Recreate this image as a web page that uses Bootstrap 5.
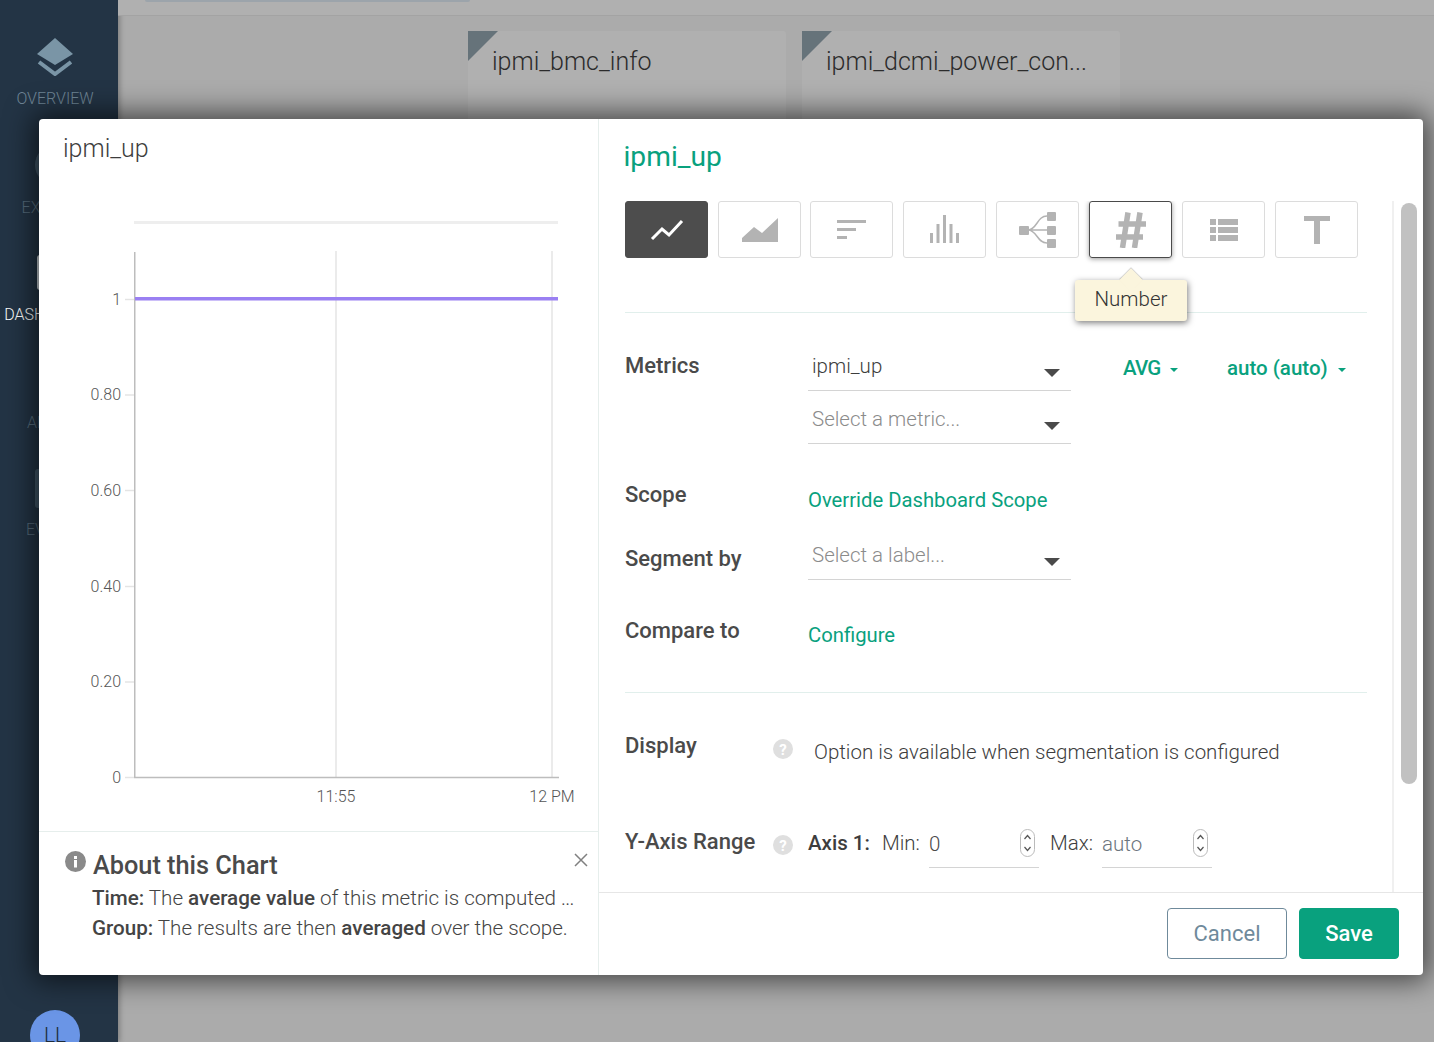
<!DOCTYPE html>
<html lang="en">
<head>
<meta charset="UTF-8">
<title>ipmi_up</title>
<link href="https://cdn.jsdelivr.net/npm/bootstrap@5.3.0/dist/css/bootstrap.min.css" rel="stylesheet">
<style>
html, body { height: 100%; overflow: hidden; }
body { font-family: Roboto, "Liberation Sans", sans-serif; color: #4a4a4a; background: #ababab; }
.app-shell { height: 1042px; }
.side-rail { width: 118px; background: #233445; color: #6f8595; box-shadow: 2px 0 5px rgba(0,0,0,.25); padding-right: 8px; }
.rail-item { height: 108px; font-size: 16px; font-weight: 300; white-space: nowrap; position: relative; }
.rail-item.first { height: 125px; padding-top: 38px; }
.rail-item span { position: absolute; left: 0; right: 0; }
.rail-active { color: #fff; }
.rail-circle { position: absolute; left: 35px; top: 20px; width: 40px; height: 40px; border-radius: 50%; background: #43586a; }
.rail-square { position: absolute; left: 37px; top: 22px; width: 36px; height: 35px; border-radius: 3px; background: #c9d0d5; }
.rail-square.dim { left: 35px; top: 20px; height: 39px; background: #43586a; }
.rail-avatar { width: 50px; height: 50px; border-radius: 50%; background: #6a95e6; color: #1d2c3b; font-size: 21px; font-weight: 300; left: 30px; top: 1010px; line-height: 50px; }
.bg-top { height: 16px; border-bottom: 1px solid #a3a3a3; background: #b0b0b0; }
.bg-topbar { left: 145px; top: 0; width: 325px; height: 2px; background: #9ca4ab; border-radius: 0 0 3px 3px; }
.bg-tile { width: 318px; height: 120px; background: #b0b0b0; font-size: 25px; font-weight: 300; color: #2b2b2b; padding: 12px 0 0 24px; border-radius: 3px 3px 0 0; }
.bg-tile::before { content: ""; position: absolute; left: 0; top: 0; border-style: solid; border-width: 30px 30px 0 0; border-color: #66737a transparent transparent transparent; }
.dash-tiles { gap: 16px; padding: 15px 0 0 350px; }
.chart-dialog { left: 39px; top: 119px; width: 1384px; height: 856px; background: #fff; border-radius: 4px; box-shadow: 0 0 28px 6px rgba(0,0,0,.6); }
.pane-left { width: 560px; border-right: 1px solid #e6eeec; }
.left-title { height: 66px; padding: 11px 0 0 24px; font-size: 25px; font-weight: 300; color: #3d3d3d; }
.chart-area { height: 646px; }
.chart-area text { font-family: Roboto, sans-serif; font-size: 16px; font-weight: 300; fill: #555; }
.about-box { height: 144px; border-top: 1px solid #e6eeec; padding-left: 25px; }
.about-title { font-size: 25.3px; font-weight: 500; line-height: 30px; color: #4a4a4a; margin: 19px 0 2px; padding-left: 29px; }
.about-line { font-size: 20.6px; font-weight: 300; line-height: 30px; color: #444; padding-left: 28px; white-space: nowrap; }
.about-line b { font-weight: 500; }
.about-dots { letter-spacing: -.7px; }
.about-close { right: 9px; top: 20px; }
.info-dot { left: 26px; top: 19px; }
.pane-right { flex: 1 1 0; min-width: 0; }
.right-title { height: 82px; padding: 20px 0 0 24.5px; font-size: 28.2px; line-height: 36px; color: #09a17e; }
.right-scroll { height: 691px; }
.right-body { width: 795px; padding: 0 26px 0 26px; border-right: 2px solid #f0f0f0; overflow: hidden; }
.scroll-track { width: 29px; }
.scroll-thumb { width: 16px; height: 581px; margin: 2px 0 0 6.5px; background: #c1c1c1; border-radius: 8px; }
.viz-btn { width: 83px; height: 57px; border: 1px solid #dcdcdc; border-radius: 3px; flex: none; }
.viz-btn.on { background: #4d4d4d; border-color: #4d4d4d; }
.viz-btn.hover { border-color: #4a4a4a; box-shadow: 0 1px 5px rgba(0,0,0,.4); }
.viz-btn.tight { margin-left: -1px; }
.viz-row { gap: 10px; }
.viz-tip { left: 476px; top: 79px; width: 112px; height: 41px; background: #fbf5dd; border-radius: 3px; box-shadow: 1px 2px 6px rgba(0,0,0,.5); font-size: 20.5px; font-weight: 300; color: #333; z-index: 2; padding-bottom: 2px; }
.viz-tip::before { content: ""; position: absolute; left: 45px; top: -11px; width: 22px; height: 22px; background: #fbf5dd; transform: rotate(45deg) scale(.75); box-shadow: -1px -1px 1px rgba(0,0,0,.2); z-index: -1; }
.rule-line { border-top: 1px solid #e1efec; width: 742px; }
.form-label-x { width: 183px; flex: none; font-size: 22px; font-weight: 500; color: #4a4a4a; }
.pick-box { width: 263px; height: 53px; border-bottom: 1px solid #d4d4d4; padding-left: 4px; font-size: 20.5px; font-weight: 300; color: #3d3d3d; line-height: 56px; flex: none; }
.pick-box.empty { color: #8b8b8b; }
.pick-box::after { content: ""; position: absolute; right: 11px; top: 31px; border-style: solid; border-width: 8px 8px 0; border-color: #4a4a4a transparent transparent; }
.green-link { color: #09a17e; font-size: 20.25px; font-weight: 400; text-decoration: none; }
.green-drop { color: #09a17e; font-size: 20.5px; font-weight: 500; }
.green-drop::after { content: ""; display: inline-block; margin-left: 10px; vertical-align: 3px; border-style: solid; border-width: 4px 4px 0; border-color: #09a17e transparent transparent; }
.plain-text { font-size: 20.5px; font-weight: 300; color: #3d3d3d; }
.axis-input { width: 110px; height: 41px; border-bottom: 1px solid #d4d4d4; font-size: 20.5px; font-weight: 300; line-height: 34px; flex: none; }
.spin-box { right: 4px; top: 2px; width: 15px; height: 28px; }
.right-foot { height: 83px; border-top: 1px solid #e6e6e6; padding: 15px 24px 0 0; gap: 12px; }
.btn-cancel, .btn-save { height: 51px; font-size: 22px; border-radius: 4px; padding: 0; }
.btn-cancel { width: 120px; background: #fff; border: 1px solid #6f8a9b; color: #6f8a9b; }
.btn-save { width: 100px; background: #09a17e; border: 1px solid #09a17e; color: #fff; font-weight: 500; }
</style>
</head>
<body>
<div class="app-shell d-flex position-relative">
    <!-- sidebar -->
    <div class="side-rail flex-shrink-0 text-center">
        <div class="rail-item first">
            <svg width="38" height="38" viewBox="0 0 38 38" class="d-block mx-auto" style="margin-bottom:11px">
                <polygon points="19,0 37,16 19,27 1,16" fill="#7a95a6"/>
                <polyline points="3,24 19,36 35,24" fill="none" stroke="#7a95a6" stroke-width="4"/>
            </svg>
            OVERVIEW
        </div>
        <div class="rail-item">
            <div class="rail-circle"></div>
            <span style="top:71px;color:#566c7c">EXPLORE</span>
        </div>
        <div class="rail-item rail-active">
            <div class="rail-square"></div>
            <span style="top:70px">DASHBOARDS</span>
        </div>
        <div class="rail-item">
            <span style="top:70px;color:#566c7c">ALERTS</span>
        </div>
        <div class="rail-item">
            <div class="rail-square dim"></div>
            <span style="top:69px;color:#566c7c">EVENTS</span>
        </div>
    </div>
    <div class="position-absolute rail-avatar text-center">LL</div>

    <!-- dashboard behind the dialog -->
    <div class="flex-grow-1">
        <div class="bg-top position-relative"></div>
        <div class="dash-tiles d-flex">
            <div class="bg-tile position-relative">ipmi_bmc_info</div>
            <div class="bg-tile position-relative">ipmi_dcmi_power_con...</div>
        </div>
    </div>
    <div class="bg-topbar position-absolute"></div>

    <!-- chart edit dialog -->
    <div class="chart-dialog position-absolute d-flex">
        <div class="pane-left d-flex flex-column">
            <div class="left-title">ipmi_up</div>
            <div class="chart-area">
                <svg width="559" height="646" viewBox="39 185 559 646" class="d-block">
                    <rect x="134" y="221" width="424" height="3" fill="#eee"/>
                    <line x1="336" y1="251" x2="336" y2="777" stroke="#e4e4e4" stroke-width="1.500"/>
                    <line x1="552" y1="251" x2="552" y2="777" stroke="#e4e4e4" stroke-width="1.500"/>
                    <g stroke="#e4e4e4" stroke-width="1.500">
                        <line x1="125" y1="299.500" x2="134" y2="299.500"/>
                        <line x1="125" y1="395" x2="134" y2="395"/>
                        <line x1="125" y1="490.500" x2="134" y2="490.500"/>
                        <line x1="125" y1="586.500" x2="134" y2="586.500"/>
                        <line x1="125" y1="682" x2="134" y2="682"/>
                        <line x1="125" y1="777.500" x2="134" y2="777.500"/>
                    </g>
                    <line x1="134.750" y1="252" x2="134.750" y2="778" stroke="#bdbdbd" stroke-width="1.500"/>
                    <line x1="134" y1="777.500" x2="559" y2="777.500" stroke="#bdbdbd" stroke-width="1.500"/>
                    <line x1="135" y1="298.700" x2="558" y2="298.700" stroke="#9a80f2" stroke-width="3.400"/>
                    <g text-anchor="end">
                        <text x="121" y="305">1</text>
                        <text x="121" y="400">0.80</text>
                        <text x="121" y="496">0.60</text>
                        <text x="121" y="592">0.40</text>
                        <text x="121" y="687">0.20</text>
                        <text x="121" y="783">0</text>
                    </g>
                    <text x="336" y="802" text-anchor="middle">11:55</text>
                    <text x="552" y="802" text-anchor="middle">12 PM</text>
                </svg>
            </div>
            <div class="about-box position-relative">
                <svg class="position-absolute info-dot" width="21" height="21" viewBox="0 0 21 21">
                    <circle cx="10.500" cy="10.500" r="10.500" fill="#8a8a8a"/>
                    <rect x="9" y="9" width="3" height="7.500" fill="#fff"/>
                    <rect x="9" y="5" width="3" height="3" fill="#fff"/>
                </svg>
                <div class="about-title">About this Chart</div>
                <div class="about-line"><b>Time:</b> The <b>average value</b> of this metric is computed <span class="about-dots">...</span></div>
                <div class="about-line"><b>Group:</b> The results are then <b>averaged</b> over the scope.</div>
                <svg class="position-absolute about-close" width="16" height="16" viewBox="0 0 16 16">
                    <path d="M2 2L14 14M14 2L2 14" stroke="#808080" stroke-width="1.500"/>
                </svg>
            </div>
        </div>

        <div class="pane-right d-flex flex-column">
            <div class="right-title">ipmi_up</div>
            <div class="right-scroll d-flex">
                <div class="right-body position-relative">
                    <div class="viz-row d-flex">
                        <div class="viz-btn on d-flex align-items-center justify-content-center">
                            <svg width="34" height="24" viewBox="0 0 34 24"><polyline points="2,21 12,11 19,17 32,3" fill="none" stroke="#fff" stroke-width="3"/></svg>
                        </div>
                        <div class="viz-btn d-flex align-items-center justify-content-center">
                            <svg width="36" height="26" viewBox="0 0 36 26"><polygon points="0,25 0,21 12,10 20,16 36,1 36,25" fill="#b3b3b3"/></svg>
                        </div>
                        <div class="viz-btn tight d-flex align-items-center justify-content-center">
                            <svg width="30" height="20" viewBox="0 0 30 20"><g fill="#b3b3b3"><rect x="0" y="0" width="29" height="3"/><rect x="0" y="8" width="19" height="3"/><rect x="0" y="16" width="10" height="3"/></g></svg>
                        </div>
                        <div class="viz-btn d-flex align-items-center justify-content-center">
                            <svg width="30" height="30" viewBox="0 0 30 30"><g fill="#b3b3b3"><rect x="0" y="18" width="3" height="10"/><rect x="6.500" y="9" width="3" height="19"/><rect x="13" y="0" width="3" height="28"/><rect x="19.500" y="9" width="3" height="19"/><rect x="26" y="18" width="3" height="10"/></g></svg>
                        </div>
                        <div class="viz-btn d-flex align-items-center justify-content-center">
                            <svg width="38" height="36" viewBox="0 0 38 36"><g fill="#b3b3b3"><rect x="0" y="14" width="10" height="9" rx="1"/><rect x="28" y="0" width="9" height="9" rx="1"/><rect x="28" y="14" width="9" height="9" rx="1"/><rect x="28" y="27" width="9" height="9" rx="1"/></g><path d="M9 18C18 18 18 4 28 4M9 18H28M9 18C18 18 18 31 28 31" fill="none" stroke="#b3b3b3" stroke-width="1.500"/></svg>
                        </div>
                        <div class="viz-btn hover d-flex align-items-center justify-content-center">
                            <svg width="30" height="36" viewBox="0 0 30 36"><path d="M12 0.500L6.500 36M24 0.500L18.500 36M2.500 12H30M0 25H27" fill="none" stroke="#b3b3b3" stroke-width="5.500"/></svg>
                        </div>
                        <div class="viz-btn d-flex align-items-center justify-content-center">
                            <svg width="28" height="22" viewBox="0 0 28 22"><g fill="#b3b3b3"><rect x="0" y="0" width="6" height="6"/><rect x="8" y="0" width="20" height="6"/><rect x="0" y="8" width="6" height="6"/><rect x="8" y="8" width="20" height="6"/><rect x="0" y="16" width="6" height="6"/><rect x="8" y="16" width="20" height="6"/></g></svg>
                        </div>
                        <div class="viz-btn d-flex align-items-center justify-content-center">
                            <svg width="26" height="28" viewBox="0 0 26 28"><g fill="#b3b3b3"><rect x="0" y="0" width="26" height="5"/><rect x="10" y="0" width="6" height="28"/></g></svg>
                        </div>
                    </div>
                    <div class="viz-tip position-absolute d-flex align-items-center justify-content-center">Number</div>
                    <div class="rule-line" style="margin-top:54px"></div>

                    <div class="d-flex" style="margin-top:25px">
                        <div class="form-label-x" style="padding-top:11px">Metrics</div>
                        <div>
                            <div class="pick-box position-relative">ipmi_up</div>
                            <div class="pick-box empty position-relative">Select a metric...</div>
                        </div>
                        <div class="green-drop" style="margin:15px 0 0 52px;width:104px;letter-spacing:-.8px">AVG</div>
                        <div class="green-drop" style="margin-top:15px">auto (auto)</div>
                    </div>

                    <div class="d-flex align-items-center" style="margin:31px 0 2px;height:50px">
                        <div class="form-label-x" style="margin-top:-12px">Scope</div>
                        <a class="green-link" href="#">Override Dashboard Scope</a>
                    </div>
                    <div class="d-flex">
                        <div class="form-label-x" style="padding-top:15px">Segment by</div>
                        <div class="pick-box empty position-relative">Select a label...</div>
                    </div>
                    <div class="d-flex align-items-center" style="margin-top:30px;height:50px">
                        <div class="form-label-x" style="margin-top:-10px">Compare to</div>
                        <a class="green-link" href="#">Configure</a>
                    </div>
                    <div class="rule-line" style="margin-top:32px"></div>

                    <div class="d-flex align-items-center" style="margin-top:36px;height:46px">
                        <div class="form-label-x" style="width:148px;margin-top:-14px">Display</div>
                        <svg width="20" height="20" viewBox="0 0 20 20" class="flex-shrink-0" style="margin-top:-7px">
                            <circle cx="10" cy="10" r="10" fill="#dfdfdf"/><text x="10" y="15.500" text-anchor="middle" fill="#fff" font-size="15" font-weight="700" font-family="Roboto">?</text>
                        </svg>
                        <div class="plain-text" style="margin-left:21px">Option is available when segmentation is configured</div>
                    </div>

                    <div class="d-flex" style="margin-top:52px">
                        <div class="form-label-x" style="width:148px;margin-top:-2px">Y-Axis Range</div>
                        <svg width="20" height="20" viewBox="0 0 20 20" class="flex-shrink-0" style="margin-top:8px">
                            <circle cx="10" cy="10" r="10" fill="#dfdfdf"/><text x="10" y="15.500" text-anchor="middle" fill="#fff" font-size="15" font-weight="700" font-family="Roboto">?</text>
                        </svg>
                        <div class="plain-text fw-medium" style="margin:1px 0 0 15px;width:74px">Axis 1:</div>
                        <div class="plain-text" style="margin-top:1px;width:47px">Min:</div>
                        <div class="axis-input position-relative">0
                            <svg class="position-absolute spin-box" viewBox="0 0 15 28"><rect x=".5" y=".5" width="14" height="27" rx="7" fill="#fff" stroke="#bbb"/><path d="M4.500 10L7.500 6.500L10.500 10M4.500 18L7.500 21.500L10.500 18" fill="none" stroke="#555" stroke-width="1.200"/></svg>
                        </div>
                        <div class="plain-text" style="margin:1px 0 0 11px;width:52px">Max:</div>
                        <div class="axis-input position-relative text-secondary">auto
                            <svg class="position-absolute spin-box" viewBox="0 0 15 28"><rect x=".5" y=".5" width="14" height="27" rx="7" fill="#fff" stroke="#bbb"/><path d="M4.500 10L7.500 6.500L10.500 10M4.500 18L7.500 21.500L10.500 18" fill="none" stroke="#555" stroke-width="1.200"/></svg>
                        </div>
                    </div>
                </div>
                <div class="scroll-track"><div class="scroll-thumb"></div></div>
            </div>
            <div class="right-foot d-flex justify-content-end">
                <button type="button" class="btn btn-cancel">Cancel</button>
                <button type="button" class="btn btn-save">Save</button>
            </div>
        </div>
    </div>
</div>
<script src="https://cdn.jsdelivr.net/npm/bootstrap@5.3.0/dist/js/bootstrap.bundle.min.js"></script>
</body>
</html>
